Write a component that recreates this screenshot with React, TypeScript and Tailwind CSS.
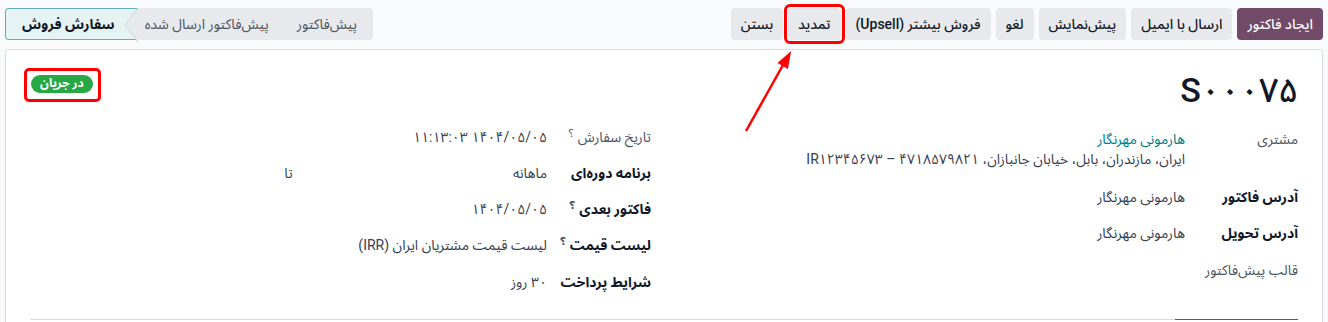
import React from 'react';

const font = { fontFamily: 'Roboto, "Noto Sans Arabic", "DejaVu Sans Condensed", "DejaVu Sans", sans-serif' };

function Btn({ label, primary, marked }: { label: string; primary?: boolean; marked?: boolean }) {
  return (
    <span className="relative">
      <button
        className={`h-8 px-[10px] rounded text-sm font-medium whitespace-nowrap ${
          primary ? 'bg-[#714b67] text-white' : 'bg-[#e7e9ed] text-[#111827]'
        }`}
      >
        {label}
      </button>
      {marked && (
        <span className="pointer-events-none absolute -inset-1 rounded-[6px] border-[3px] border-[#f00]" />
      )}
    </span>
  );
}

function Help() {
  return <sup className="text-[11px] text-gray-600 mr-1">؟</sup>;
}

function Row({
  label,
  bold,
  help,
  width,
  children,
  className = 'h-9',
}: {
  label: string;
  bold?: boolean;
  help?: boolean;
  width: string;
  children?: React.ReactNode;
  className?: string;
}) {
  return (
    <div className={`flex items-center ${className}`}>
      <div
        className={`${width} shrink-0 whitespace-nowrap ${bold ? 'font-bold text-[#111827]' : 'text-[#4b5563]'}`}
      >
        {label}
        {help && <Help />}
      </div>
      <div className="flex-1 text-[#374151]">{children}</div>
    </div>
  );
}

export default function App() {
  const buttons = [
    'ایجاد فاکتور',
    'ارسال با ایمیل',
    'پیش‌نمایش',
    'لغو',
    'فروش بیشتر (Upsell)',
    'تمدید',
    'بستن',
  ];

  return (
    <div dir="rtl" style={font} className="relative h-[322px] overflow-hidden bg-[#f9fafb] text-sm">
      {/* Control panel */}
      <div className="flex items-center justify-between px-[5px] pt-2">
        <div className="flex gap-[5px]">
          {buttons.map((b, i) => (
            <Btn key={b} label={b} primary={i === 0} marked={b === 'تمدید'} />
          ))}
        </div>

        {/* Status bar */}
        <div className="flex h-8">
          <div className="flex bg-[#e7e9ed] rounded-r-sm text-[#4b5563]">
            <div className="flex items-center px-[16px]">پیش‌فاکتور</div>
            <div className="flex items-center pr-[12px] pl-[7px]">پیش‌فاکتور ارسال شده</div>
          </div>
          <div className="relative flex items-center bg-[#e6f3f4] border-y border-l border-[#5fb1b5] rounded-l-sm pl-[16px] pr-[23px] font-bold text-[#111827]">
            <svg className="absolute right-0 top-[-1px]" width="13" height="34" viewBox="0 0 13 34">
              <polygon points="13,0 0,17 13,34" fill="#e7e9ed" />
              <polyline points="13,0 0,17 13,34" fill="none" stroke="#c9d6da" strokeWidth="1" />
            </svg>
            سفارش فروش
          </div>
        </div>
      </div>

      {/* Form sheet */}
      <div className="mx-[5px] mt-[9px] h-[400px] rounded-t border border-[#d8dadd] bg-white px-6">
        <div className="flex items-start justify-between pt-[20px]">
          <h1 className="text-[34px] leading-[40px] font-medium text-[#111827]">S۰۰۰۷۵</h1>
          <span className="relative mt-[5px] ml-[1px]">
            <span className="flex h-[18px] items-center rounded-full bg-[#28a745] px-[9px] text-[12px] font-bold text-white">
              در جریان
            </span>
            <span className="pointer-events-none absolute -top-[7px] -left-[7px] -right-[8px] -bottom-[9px] rounded-[5px] border-[3px] border-[#f00]" />
          </span>
        </div>

        <div className="mt-[9px] grid grid-cols-2 gap-4">
          {/* Right group */}
          <div>
            <Row label="مشتری" width="w-[113px]" className="items-start pt-[10px] pb-[10px]">
              <div className="leading-5 text-[#017e84]">هارمونی مهرنگار</div>
              <div className="leading-5">ایران، مازندران، بابل، خیابان جانبازان، ۴۷۱۸۵۷۹۸۲۱ – IR۱۲۳۴۵۶۷۳</div>
            </Row>
            <Row label="آدرس فاکتور" bold width="w-[113px]">
              هارمونی مهرنگار
            </Row>
            <Row label="آدرس تحویل" bold width="w-[113px]">
              هارمونی مهرنگار
            </Row>
            <Row label="قالب پیش‌فاکتور" width="w-[113px]" className="h-[38px]" />
          </div>

          {/* Left group */}
          <div className="pr-[5px]">
            <Row label="تاریخ سفارش" help width="w-[104px]">
              ۱۴۰۴/۰۵/۰۵ ۱۱:۱۳:۰۳
            </Row>
            <Row label="برنامه دوره‌ای" bold width="w-[104px]">
              <div className="flex">
                <div className="flex-1">ماهانه</div>
                <div className="px-2">تا</div>
                <div className="flex-1" />
              </div>
            </Row>
            <Row label="فاکتور بعدی" bold help width="w-[104px]">
              ۱۴۰۴/۰۵/۰۵
            </Row>
            <Row label="لیست قیمت" bold help width="w-[104px]">
              لیست قیمت مشتریان ایران (IRR)
            </Row>
            <Row label="شرایط پرداخت" bold width="w-[104px]" className="h-[38px]">
              ۳۰ روز
            </Row>
          </div>
        </div>

        {/* Notebook tabs edge */}
        <div className="mt-[18px] flex border-t border-[#d8dadd]">
          <div className="-mt-px h-8 w-[123px] border-t border-[#714b67]" />
        </div>
      </div>

      {/* Annotation arrow */}
      <svg className="pointer-events-none absolute inset-0" width="1328" height="322">
        <line x1="746" y1="131" x2="783" y2="65" stroke="#f00" strokeWidth="2.5" />
        <polygon points="790,53 787.4,67.7 778.8,62.8" fill="#f00" stroke="#f00" strokeWidth="1.5" />
      </svg>
    </div>
  );
}
